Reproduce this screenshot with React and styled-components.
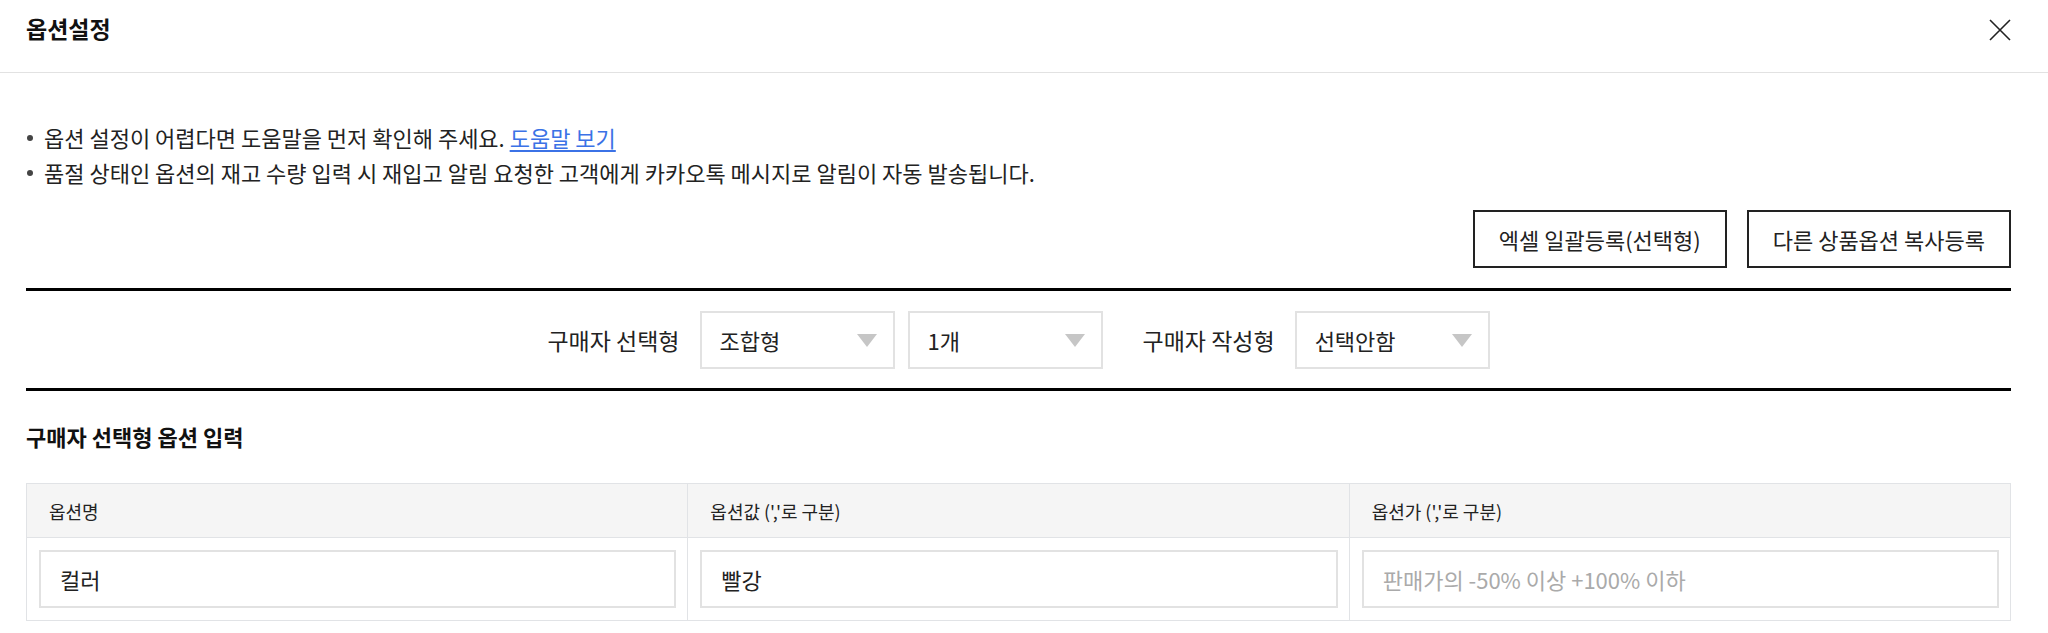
import React from "react";
import styled, { createGlobalStyle } from "styled-components";

const GlobalStyle = createGlobalStyle`
  html, body {
    margin: 0;
    padding: 0;
    background: #fff;
  }
  body {
    font-family: "Noto Sans CJK KR", "Noto Sans", sans-serif;
    color: #222;
  }
  * {
    box-sizing: border-box;
  }
`;

const Modal = styled.div`
  width: 2048px;
  background: #fff;
`;

const Header = styled.header`
  height: 73px;
  display: flex;
  align-items: center;
  justify-content: space-between;
  padding: 0 36px 0 26px;
  border-bottom: 1px solid #e2e2e2;
`;

const Title = styled.h2`
  margin: 0 0 17px;
  font-size: 23px;
  font-weight: 700;
  line-height: 30px;
  color: #111;
`;

const CloseButton = styled.button`
  width: 24px;
  height: 24px;
  padding: 0;
  margin-bottom: 13px;
  border: 0;
  background: none;
  display: flex;
  align-items: center;
  justify-content: center;
  cursor: pointer;
`;

const Body = styled.div`
  padding: 47px 37px 0 26px;
`;

const NoticeList = styled.ul`
  margin: 0;
  padding: 0;
  list-style: none;
`;

const NoticeItem = styled.li`
  position: relative;
  padding-left: 18px;
  font-size: 22px;
  line-height: 35px;
  color: #222;

  &::before {
    content: "";
    position: absolute;
    left: 1px;
    top: 15px;
    width: 6px;
    height: 6px;
    border-radius: 50%;
    background: #444;
  }
`;

const HelpLink = styled.a`
  color: #3b72e6;
  text-decoration: underline;
  text-underline-offset: 3px;
`;

const ButtonRow = styled.div`
  display: flex;
  justify-content: flex-end;
  gap: 20px;
  margin-top: 20px;
`;

const OutlineButton = styled.button`
  height: 58px;
  padding: 0 24px;
  border: 2px solid #222;
  background: #fff;
  font-family: inherit;
  font-size: 22px;
  color: #222;
  cursor: pointer;
`;

const TypeBar = styled.div`
  margin-top: 20px;
  border-top: 3px solid #000;
  border-bottom: 3px solid #000;
  padding: 20px 0 19px;
  display: flex;
  align-items: center;
  justify-content: center;
`;

const FieldLabel = styled.span`
  font-size: 23px;
  line-height: 30px;
  color: #222;
  margin: 0 20px 0 ${(p) => (p.$first ? 0 : 40)}px;
`;

const SelectBox = styled.div`
  position: relative;
  width: 195px;
  height: 58px;
  margin-right: ${(p) => (p.$gap ? 13 : 0)}px;
  border: 2px solid #e2e2e2;
  display: flex;
  align-items: center;
  padding: 0 18px;
  font-size: 22px;
  color: #222;
`;

const Caret = styled.span`
  position: absolute;
  right: 16px;
  top: 50%;
  margin-top: -6px;
  width: 0;
  height: 0;
  border-left: 10px solid transparent;
  border-right: 10px solid transparent;
  border-top: 13px solid #c6c6c6;
`;

const SectionTitle = styled.h3`
  margin: 30px 0 32px;
  font-size: 22px;
  font-weight: 700;
  line-height: 30px;
  color: #111;
`;

const OptionTable = styled.div`
  display: grid;
  grid-template-columns: repeat(3, 1fr);
  border-top: 1px solid #e1e3e6;
  border-left: 1px solid #e1e3e6;
`;

const HeadCell = styled.div`
  height: 54px;
  display: flex;
  align-items: center;
  padding-left: 22px;
  background: #f5f5f5;
  border-right: 1px solid #e1e3e6;
  border-bottom: 1px solid #e1e3e6;
  font-size: 18px;
  color: #222;
`;

const BodyCell = styled.div`
  padding: 12px 11px 12px 12px;
  border-right: 1px solid #e1e3e6;
  border-bottom: 1px solid #e1e3e6;
`;

const TextInput = styled.input`
  display: block;
  width: 100%;
  height: 58px;
  border: 2px solid #e2e2e2;
  padding: 0 19px;
  font-family: inherit;
  font-size: 22px;
  color: #222;
  outline: none;

  &::placeholder {
    color: #aaa;
  }
`;

const selects = [
  { label: "구매자 선택형", boxes: ["조합형", "1개"] },
  { label: "구매자 작성형", boxes: ["선택안함"] },
];

const columns = [
  { head: "옵션명", value: "컬러" },
  { head: "옵션값 (','로 구분)", value: "빨강" },
  { head: "옵션가 (','로 구분)", placeholder: "판매가의 -50% 이상 +100% 이하" },
];

export default function App() {
  return (
    <>
      <GlobalStyle />
      <Modal>
        <Header>
          <Title>옵션설정</Title>
          <CloseButton aria-label="닫기">
            <svg width="22" height="22" viewBox="0 0 22 22">
              <path d="M1 1L21 21M21 1L1 21" stroke="#222" strokeWidth="1.6" fill="none" />
            </svg>
          </CloseButton>
        </Header>
        <Body>
          <NoticeList>
            <NoticeItem>
              옵션 설정이 어렵다면 도움말을 먼저 확인해 주세요. <HelpLink href="#">도움말 보기</HelpLink>
            </NoticeItem>
            <NoticeItem>
              품절 상태인 옵션의 재고 수량 입력 시 재입고 알림 요청한 고객에게 카카오톡 메시지로 알림이 자동 발송됩니다.
            </NoticeItem>
          </NoticeList>

          <ButtonRow>
            <OutlineButton>엑셀 일괄등록(선택형)</OutlineButton>
            <OutlineButton>다른 상품옵션 복사등록</OutlineButton>
          </ButtonRow>

          <TypeBar>
            {selects.map((s, i) => (
              <React.Fragment key={s.label}>
                <FieldLabel $first={i === 0}>{s.label}</FieldLabel>
                {s.boxes.map((b, j) => (
                  <SelectBox key={b} $gap={j < s.boxes.length - 1}>
                    {b}
                    <Caret />
                  </SelectBox>
                ))}
              </React.Fragment>
            ))}
          </TypeBar>

          <SectionTitle>구매자 선택형 옵션 입력</SectionTitle>

          <OptionTable>
            {columns.map((c) => (
              <HeadCell key={c.head}>{c.head}</HeadCell>
            ))}
            {columns.map((c) => (
              <BodyCell key={c.head}>
                <TextInput defaultValue={c.value} placeholder={c.placeholder} readOnly />
              </BodyCell>
            ))}
          </OptionTable>
        </Body>
      </Modal>
    </>
  );
}
